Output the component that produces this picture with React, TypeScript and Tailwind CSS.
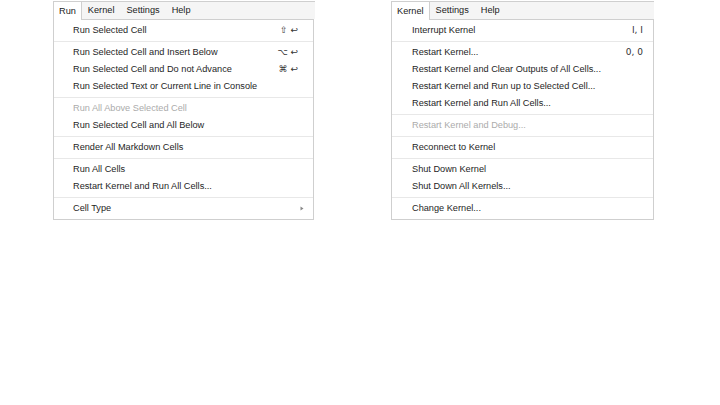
import React from "react";

type Item = { label?: string; key?: string; disabled?: boolean; sep?: boolean; sub?: boolean };

const runItems: Item[] = [
  { label: "Run Selected Cell", key: "⇧ ↩" },
  { sep: true },
  { label: "Run Selected Cell and Insert Below", key: "⌥ ↩" },
  { label: "Run Selected Cell and Do not Advance", key: "⌘ ↩" },
  { label: "Run Selected Text or Current Line in Console" },
  { sep: true },
  { label: "Run All Above Selected Cell", disabled: true },
  { label: "Run Selected Cell and All Below" },
  { sep: true },
  { label: "Render All Markdown Cells" },
  { sep: true },
  { label: "Run All Cells" },
  { label: "Restart Kernel and Run All Cells..." },
  { sep: true },
  { label: "Cell Type", sub: true },
];

const kernelItems: Item[] = [
  { label: "Interrupt Kernel", key: "I, I" },
  { sep: true },
  { label: "Restart Kernel...", key: "0, 0" },
  { label: "Restart Kernel and Clear Outputs of All Cells..." },
  { label: "Restart Kernel and Run up to Selected Cell..." },
  { label: "Restart Kernel and Run All Cells..." },
  { sep: true },
  { label: "Restart Kernel and Debug...", disabled: true },
  { sep: true },
  { label: "Reconnect to Kernel" },
  { sep: true },
  { label: "Shut Down Kernel" },
  { label: "Shut Down All Kernels..." },
  { sep: true },
  { label: "Change Kernel..." },
];

function Menu({
  tabs,
  items,
  padL,
  padR,
  barW,
  menuW,
}: {
  tabs: string[];
  items: Item[];
  padL: string;
  padR: string;
  barW: string;
  menuW: string;
}) {
  return (
    <div className={`flex flex-col ${barW}`}>
      <div className="flex h-[18px] border-t border-[#cfcfcf] bg-[#f5f5f5] pt-px text-[9.2px] text-[#222]">
        {tabs.map((t, i) => (
          <div
            key={t}
            className={
              i === 0
                ? "relative z-10 -mb-px -mt-px flex items-center border-x border-[#cfcfcf] bg-white px-[5px] pt-px"
                : "flex items-center px-[6px]"
            }
          >
            {t}
          </div>
        ))}
      </div>
      <div className={`${menuW} border border-[#cfcfcf] bg-white py-[2px] text-[9.2px] text-[#1e1e1e]`}>
        {items.map((it, i) =>
          it.sep ? (
            <div key={i} className="my-[2px] h-px bg-[#e8e8e8]" />
          ) : (
            <div
              key={i}
              className={`flex h-[17px] items-center justify-between ${padL} ${padR} ${
                it.disabled ? "text-[#ababab]" : ""
              }`}
            >
              <span>{it.label}</span>
              {it.key ? (
                <span className="text-[9px] text-[#333]" style={{ fontFamily: "'DejaVu Sans', sans-serif" }}>
                  {it.key}
                </span>
              ) : null}
              {it.sub ? (
                <svg width="4" height="5" viewBox="0 0 4 5" className="mr-[-6px]">
                  <path d="M0.5 0.5 L3.5 2.5 L0.5 4.5 Z" fill="#888" />
                </svg>
              ) : null}
            </div>
          )
        )}
      </div>
    </div>
  );
}

export default function App() {
  return (
    <div
      className="flex h-[405px] w-[720px] bg-white pl-[53px] pt-px"
      style={{ fontFamily: "'Liberation Sans', Arial, sans-serif" }}
    >
      <Menu
        tabs={["Run", "Kernel", "Settings", "Help"]}
        items={runItems}
        padL="pl-[19px]"
        padR="pr-[15px]"
        barW="w-[262px]"
        menuW="w-[261px]"
      />
      <div className="w-[76px]" />
      <Menu
        tabs={["Kernel", "Settings", "Help"]}
        items={kernelItems}
        padL="pl-[20px]"
        padR="pr-[10px]"
        barW="w-[263px]"
        menuW="w-[263px]"
      />
    </div>
  );
}
